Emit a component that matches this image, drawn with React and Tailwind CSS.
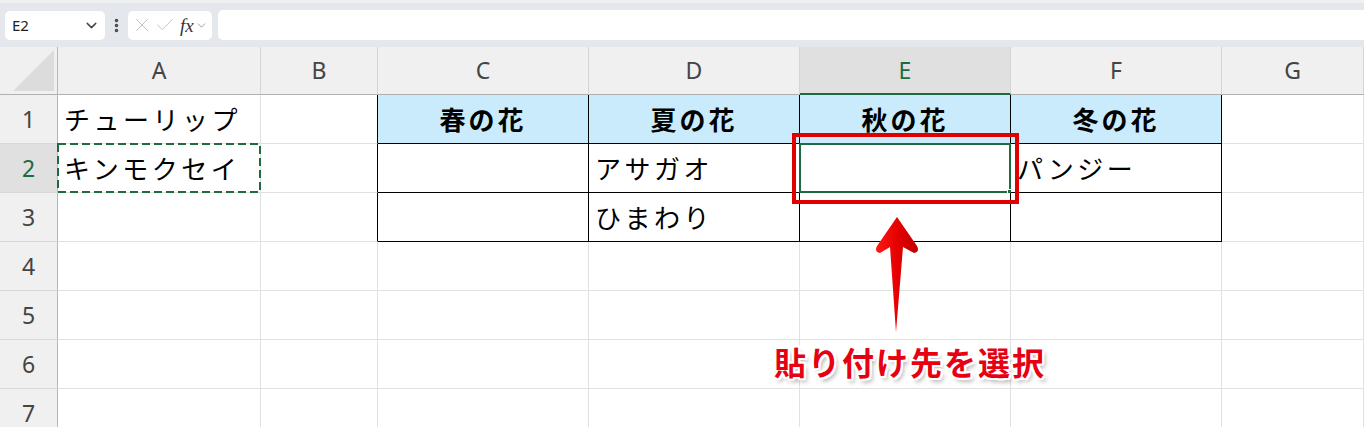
import { ChevronDown, EllipsisVertical, X, Check } from 'lucide-react'

const cols = ['A', 'B', 'C', 'D', 'E', 'F', 'G']
const rows = [1, 2, 3, 4, 5, 6, 7]

const data = {
  A1: 'チューリップ',
  A2: 'キンモクセイ',
  C1: '春の花',
  D1: '夏の花',
  E1: '秋の花',
  F1: '冬の花',
  D2: 'アサガオ',
  D3: 'ひまわり',
  F2: 'パンジー',
}

const jp = "font-['Noto_Sans_CJK_JP','Noto_Sans',sans-serif]"
const ui = "font-['Noto_Sans','Open_Sans',sans-serif]"

function Toolbar() {
  return (
    <div className="h-[47px] bg-[#e4e7eb] border-t-[3px] border-t-[#eef0f2] flex items-center pl-[5px] gap-[6px]">
      <div className="w-[100px] h-[29px] bg-white rounded-[5px] flex items-center justify-between pl-[7px] pr-[5px]">
        <span className={`${ui} text-[15px] text-[#222]`}>E2</span>
        <ChevronDown size={17} strokeWidth={2} className="text-[#444]" />
      </div>
      <EllipsisVertical size={17} strokeWidth={3} className="text-[#444] -mx-[3px]" />
      <div className="w-[84px] h-[29px] bg-white rounded-[5px] flex items-center pl-[3px]">
        <X size={22} strokeWidth={1} className="text-[#bcbcbc]" />
        <Check size={22} strokeWidth={1} className="text-[#bcbcbc] ml-[1px]" />
        <span className="font-['Liberation_Serif',serif] italic text-[19px] text-[#333] ml-[4px] leading-none">fx</span>
        <ChevronDown size={13} strokeWidth={1.3} className="text-[#777] ml-[1px]" />
      </div>
      <div className="flex-1 h-[30px] bg-white rounded-l-[5px]" />
    </div>
  )
}

function Corner() {
  return (
    <div className="bg-[#f0f0f0] border-r border-r-[#b8b8b8] border-b border-b-[#b0b0b0] relative">
      <svg className="absolute right-[3px] bottom-[3px]" width="41" height="41" viewBox="0 0 41 41">
        <polygon points="41,0 41,41 0,41" fill="#dcdcdc" />
      </svg>
    </div>
  )
}

function ColHeader({ c }) {
  const sel = c === 'E'
  return (
    <div
      className={`flex items-center justify-center ${ui} text-[23px] border-r border-r-[#d4d4d4] ${
        sel
          ? 'bg-[#e0e0e0] text-[#1e6b40] border-b-2 border-b-[#1e6b40]'
          : 'bg-[#f0f0f0] text-[#444] border-b border-b-[#b0b0b0]'
      }`}
    >
      {c}
    </div>
  )
}

function RowHeader({ r }) {
  const sel = r === 2
  return (
    <div
      className={`flex items-center justify-center ${ui} text-[23px] border-r border-r-[#b8b8b8] border-b border-b-[#d8d8d8] ${
        sel ? 'bg-[#e0e0e0] text-[#1e6b40]' : 'bg-[#f0f0f0] text-[#444]'
      }`}
    >
      {r}
    </div>
  )
}

function Cell({ c, r }) {
  const id = `${c}${r}`
  const inTable = r <= 3 && 'CDEF'.includes(c)
  const rightBlack = r <= 3 && 'BCDEF'.includes(c)
  const head = inTable && r === 1
  const text = data[id]
  return (
    <div
      className={`relative flex items-center ${jp} border-r border-b ${
        rightBlack ? 'border-r-black' : 'border-r-[#e1e1e1]'
      } ${inTable ? 'border-b-black' : 'border-b-[#e1e1e1]'} ${
        head
          ? 'bg-[#c9ebfb] justify-center font-bold text-[26px] tracking-[3px] text-black'
          : 'bg-white pl-[6px] text-[26px] tracking-[3.5px] text-black'
      }`}
    >
      {text && <span className="whitespace-nowrap leading-none">{text}</span>}
      {id === 'A2' && (
        <svg className="absolute -left-[1px] -top-[1px]" width="204" height="50" viewBox="0 0 204 50">
          <rect x="1" y="1" width="202" height="48" fill="none" stroke="#1e6b40" strokeWidth="2" strokeDasharray="8 4" />
        </svg>
      )}
      {id === 'E2' && (
        <div className="absolute -left-[1px] -top-[1px] -right-[1px] -bottom-[1px] border-2 border-[#1e6b40]">
          <div className="absolute -right-[5px] -bottom-[5px] w-[7px] h-[7px] bg-[#1e6b40] border border-white" />
        </div>
      )}
    </div>
  )
}

export default function App() {
  return (
    <div className="relative w-[1364px] h-[427px] overflow-hidden bg-white">
      <Toolbar />
      <div className="grid grid-cols-[58px_203px_117px_211px_211px_211px_211px_1fr] grid-rows-[48px_repeat(7,49px)]">
        <Corner />
        {cols.map((c) => (
          <ColHeader key={c} c={c} />
        ))}
        {rows.map((r) => [
          <RowHeader key={`h${r}`} r={r} />,
          ...cols.map((c) => <Cell key={`${c}${r}`} c={c} r={r} />),
        ])}
      </div>

      {/* annotation */}
      <div className="absolute left-[792px] top-[133px] w-[227px] h-[71px] border-[4px] border-[#e00000]" />
      <svg className="absolute left-[870px] top-[214px]" width="54" height="122" viewBox="870 214 54 122">
        <defs>
          <linearGradient id="ag" x1="0" x2="1" y1="0" y2="0">
            <stop offset="0" stopColor="#ff1a1a" />
            <stop offset="0.5" stopColor="#e60000" />
            <stop offset="1" stopColor="#c00000" />
          </linearGradient>
        </defs>
        <path
          d="M897 217 L917 246 Q920 252 914 253 L903 247 L896 332 L890 247 L880 253 Q874 252 877 246 Z"
          fill="url(#ag)"
        />
      </svg>
      <div
        className={`absolute left-[774px] top-[345px] ${jp} font-bold text-[32px] leading-none tracking-[2px] text-[#e60012] whitespace-nowrap [text-shadow:2px_0_0_#fff,-2px_0_0_#fff,0_2px_0_#fff,0_-2px_0_#fff,2px_2px_0_#fff,-2px_-2px_0_#fff,2px_-2px_0_#fff,-2px_2px_0_#fff,3px_4px_4px_rgba(0,0,0,0.3)]`}
      >
        貼り付け先を選択
      </div>
    </div>
  )
}
